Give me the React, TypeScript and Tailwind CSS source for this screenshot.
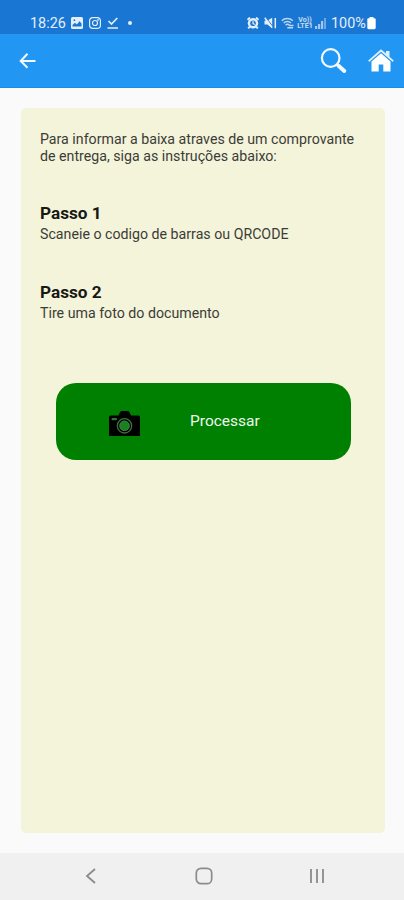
const steps = [
  {
    title: "Passo 1",
    text: "Scaneie o codigo de barras ou QRCODE",
  },
  {
    title: "Passo 2",
    text: "Tire uma foto do documento",
  },
];

function StatusBar() {
  return (
    <div className="h-[34px] bg-[#1976d2] text-[#e3effa] flex items-start justify-between pt-[16px] pl-[30px] pr-[28px]">
      <div className="flex items-center h-[14px]">
        <span className="w-[41px] pt-[2px] text-[14.4px] leading-[14px] whitespace-nowrap">18:26</span>
        <svg className="w-[12px] h-[12px]" viewBox="0 0 12 12">
          <rect width="12" height="12" rx="1.5" fill="currentColor" />
          <path d="M1.5 9.5V8L4 5.8l1.8 1.6L8.5 4.2l2 2.3v3z" fill="#1976d2" />
          <circle cx="3.4" cy="3.2" r="0.9" fill="#1976d2" />
        </svg>
        <svg className="w-[12px] h-[12px] ml-[6px]" viewBox="0 0 12 12" fill="none" stroke="currentColor" strokeWidth="1.2">
          <rect x="0.6" y="0.6" width="10.8" height="10.8" rx="3.2" />
          <circle cx="6" cy="6" r="2.5" />
          <circle cx="9" cy="3" r="0.3" />
        </svg>
        <svg className="w-[12px] h-[12px] ml-[6px]" viewBox="0 0 12 12" fill="none" stroke="currentColor" strokeWidth="1.7">
          <path d="M1.5 4l3 3 5.8-6M0.5 11h10.5" />
        </svg>
        <span className="w-[4px] h-[4px] ml-[9px] rounded-full bg-[#e3effa]" />
      </div>
      <div className="flex items-center h-[14px]">
        <svg className="w-[12px] h-[12px]" viewBox="0 0 12 12">
          <path d="M0.5 2.8L3 0.6M11.5 2.8L9 0.6M2.6 9.8l-1.4 1.6M9.4 9.8l1.4 1.6" stroke="currentColor" strokeWidth="2" />
          <circle cx="6" cy="6.3" r="5.2" fill="currentColor" />
          <circle cx="6" cy="6.3" r="2.8" fill="#1976d2" />
          <path d="M6 4v2.6l1.8 1" fill="none" stroke="currentColor" strokeWidth="1.2" />
        </svg>
        <svg className="w-[13px] h-[12px] ml-[5px]" viewBox="0 0 13 12">
          <path d="M0.5 3.5h3L8.2 0.8v10.6L3.5 7.6h-3z" fill="currentColor" />
          <path d="M2.4 1l6 8" stroke="#1976d2" strokeWidth="1" />
          <path d="M0.8 0.8l7.2 9.6M11.3 1v10.3" fill="none" stroke="currentColor" strokeWidth="1.5" />
        </svg>
        <svg className="w-[13px] h-[12px] ml-[4px] opacity-80" viewBox="0 0 13 12" fill="none" stroke="currentColor" strokeWidth="1.5">
          <path d="M0.8 3.8c3-3 8-3 11 0M2.7 6c2-1.9 5.3-1.9 7.3 0M4.6 8.1c1-1 2.7-1 3.7 0" />
          <path d="M8 8.5h4.5M6.3 10.8H12" />
        </svg>
        <div className="w-[16px] h-[13px] ml-[3px] flex flex-col items-center text-[7px] leading-[6.5px] font-bold opacity-85">
          <span>Vo))</span>
          <span>LTE1</span>
        </div>
        <svg className="w-[11px] h-[12px] ml-[2px] opacity-85" viewBox="0 0 11 12" fill="currentColor">
          <rect y="9" width="2.2" height="3" opacity=".8" />
          <rect x="3" y="7" width="2.2" height="5" opacity=".8" />
          <rect x="6" y="4" width="2.2" height="8" opacity=".8" />
          <rect x="9" y="1" width="2" height="11" opacity=".5" />
        </svg>
        <span className="w-[36px] ml-[5px] pt-[2px] text-[14.4px] leading-[14px] whitespace-nowrap">100%</span>
        <svg className="w-[9px] h-[13px]" viewBox="0 0 9 13" fill="#fff">
          <rect x="2.5" width="4" height="2.5" rx="0.5" />
          <rect x="0.3" y="1.2" width="8.4" height="11" rx="1.4" />
        </svg>
      </div>
    </div>
  );
}

function AppBar() {
  return (
    <header className="h-[54px] bg-[#2196f3] border-b border-[#1b8be6] flex items-center justify-between pl-[19px] pr-[10px]">
      <button aria-label="Voltar">
        <svg className="w-[17px] h-[17px]" viewBox="0 0 17 17" fill="none" stroke="#f2f9ff" strokeWidth="2">
          <path d="M16.5 9H2M8.5 1.7L1.7 9l6.8 6.8" />
        </svg>
      </button>
      <div className="flex items-center gap-[20px]">
        <svg className="w-[28px] h-[26px]" viewBox="0 0 28 26" fill="none" stroke="#f2f9ff">
          <circle cx="10.7" cy="10" r="8.8" strokeWidth="2.2" />
          <path d="M16.8 16.3l2 2" strokeWidth="2.4" />
          <path d="M18.5 17.8l5.8 5.2" strokeWidth="4" strokeLinecap="round" />
        </svg>
        <svg className="w-[26px] h-[24px]" viewBox="0 0 26 24" fill="#fff">
          <path d="M13 0.3L18 4.6V2h3.5v5.7l4.3 3.9-1 1.3L13 2.7 1.2 12.9l-1-1.3z" opacity=".85" />
          <path d="M13 4.2l9.5 8.4v9.9h-7.2v-7h-4.6v7H3.5v-9.9z" />
        </svg>
      </div>
    </header>
  );
}

function NavBar() {
  return (
    <nav className="h-[47px] bg-[#f0f0f0] flex items-start justify-between pt-[14px] pl-[85px] pr-[79px]">
      <svg className="w-[12px] h-[18px]" viewBox="0 0 12 18" fill="none" stroke="#8b8b8b" strokeWidth="1.8">
        <path d="M10 2L2 9l8 7" />
      </svg>
      <svg className="w-[18px] h-[18px] ml-[2px]" viewBox="0 0 18 18" fill="none" stroke="#8b8b8b" strokeWidth="1.7">
        <rect x="1.3" y="1.3" width="15.4" height="15.4" rx="4.8" />
      </svg>
      <svg className="w-[16px] h-[18px]" viewBox="0 0 16 18" stroke="#8b8b8b" strokeWidth="1.8">
        <path d="M2 2v14M8 2v14M14 2v14" />
      </svg>
    </nav>
  );
}

export default function App() {
  return (
    <div className="w-full h-[900px] flex flex-col bg-[#fafafa] font-['Roboto',sans-serif] overflow-hidden">
      <StatusBar />
      <AppBar />
      <main className="flex-1 pt-[20px] pb-[20px] pl-[21px] pr-[19px] flex">
        <section className="w-full rounded-[5px] bg-[#f3f4da] px-[19px] pt-[23px] text-[#3c3c37]">
          <p className="text-[14.2px] leading-[17px] whitespace-nowrap">
            Para informar a baixa atraves de um comprovante
            <br />
            de entrega, siga as instruções abaixo:
          </p>
          <div className="pt-[37px] flex flex-col gap-[37px]">
            {steps.map((step) => (
              <div key={step.title}>
                <h2 className="text-[17.2px] leading-[22px] font-bold text-[#181815]">{step.title}</h2>
                <p className="text-[14.2px] leading-[20px] whitespace-nowrap">{step.text}</p>
              </div>
            ))}
          </div>
          <button className="w-[295px] h-[77px] ml-[16px] mt-[60px] rounded-[20px] bg-[#008000] flex items-center pl-[53px] text-[15.5px] text-[#eef7ee]">
            <svg className="w-[31px] h-[25px] mt-[4px]" viewBox="0 0 31 25">
              <path d="M1.5 4.5h8L11 1.2Q11.5 0 13 0h5.5q1.5 0 2 1.2L22 4.5h7.5q1.5 0 1.5 1.5V25H0V6q0-1.5 1.5-1.5z" fill="#000" />
              <rect x="2.5" y="7" width="5.5" height="2.2" rx="1" fill="#37753a" />
              <circle cx="15.5" cy="14.8" r="7.2" fill="none" stroke="#37753a" strokeWidth="1.3" />
              <circle cx="15.5" cy="14.8" r="4.8" fill="#178020" stroke="#4a804a" strokeWidth="1" />
            </svg>
            <span className="ml-[50px]">Processar</span>
          </button>
        </section>
      </main>
      <NavBar />
    </div>
  );
}
